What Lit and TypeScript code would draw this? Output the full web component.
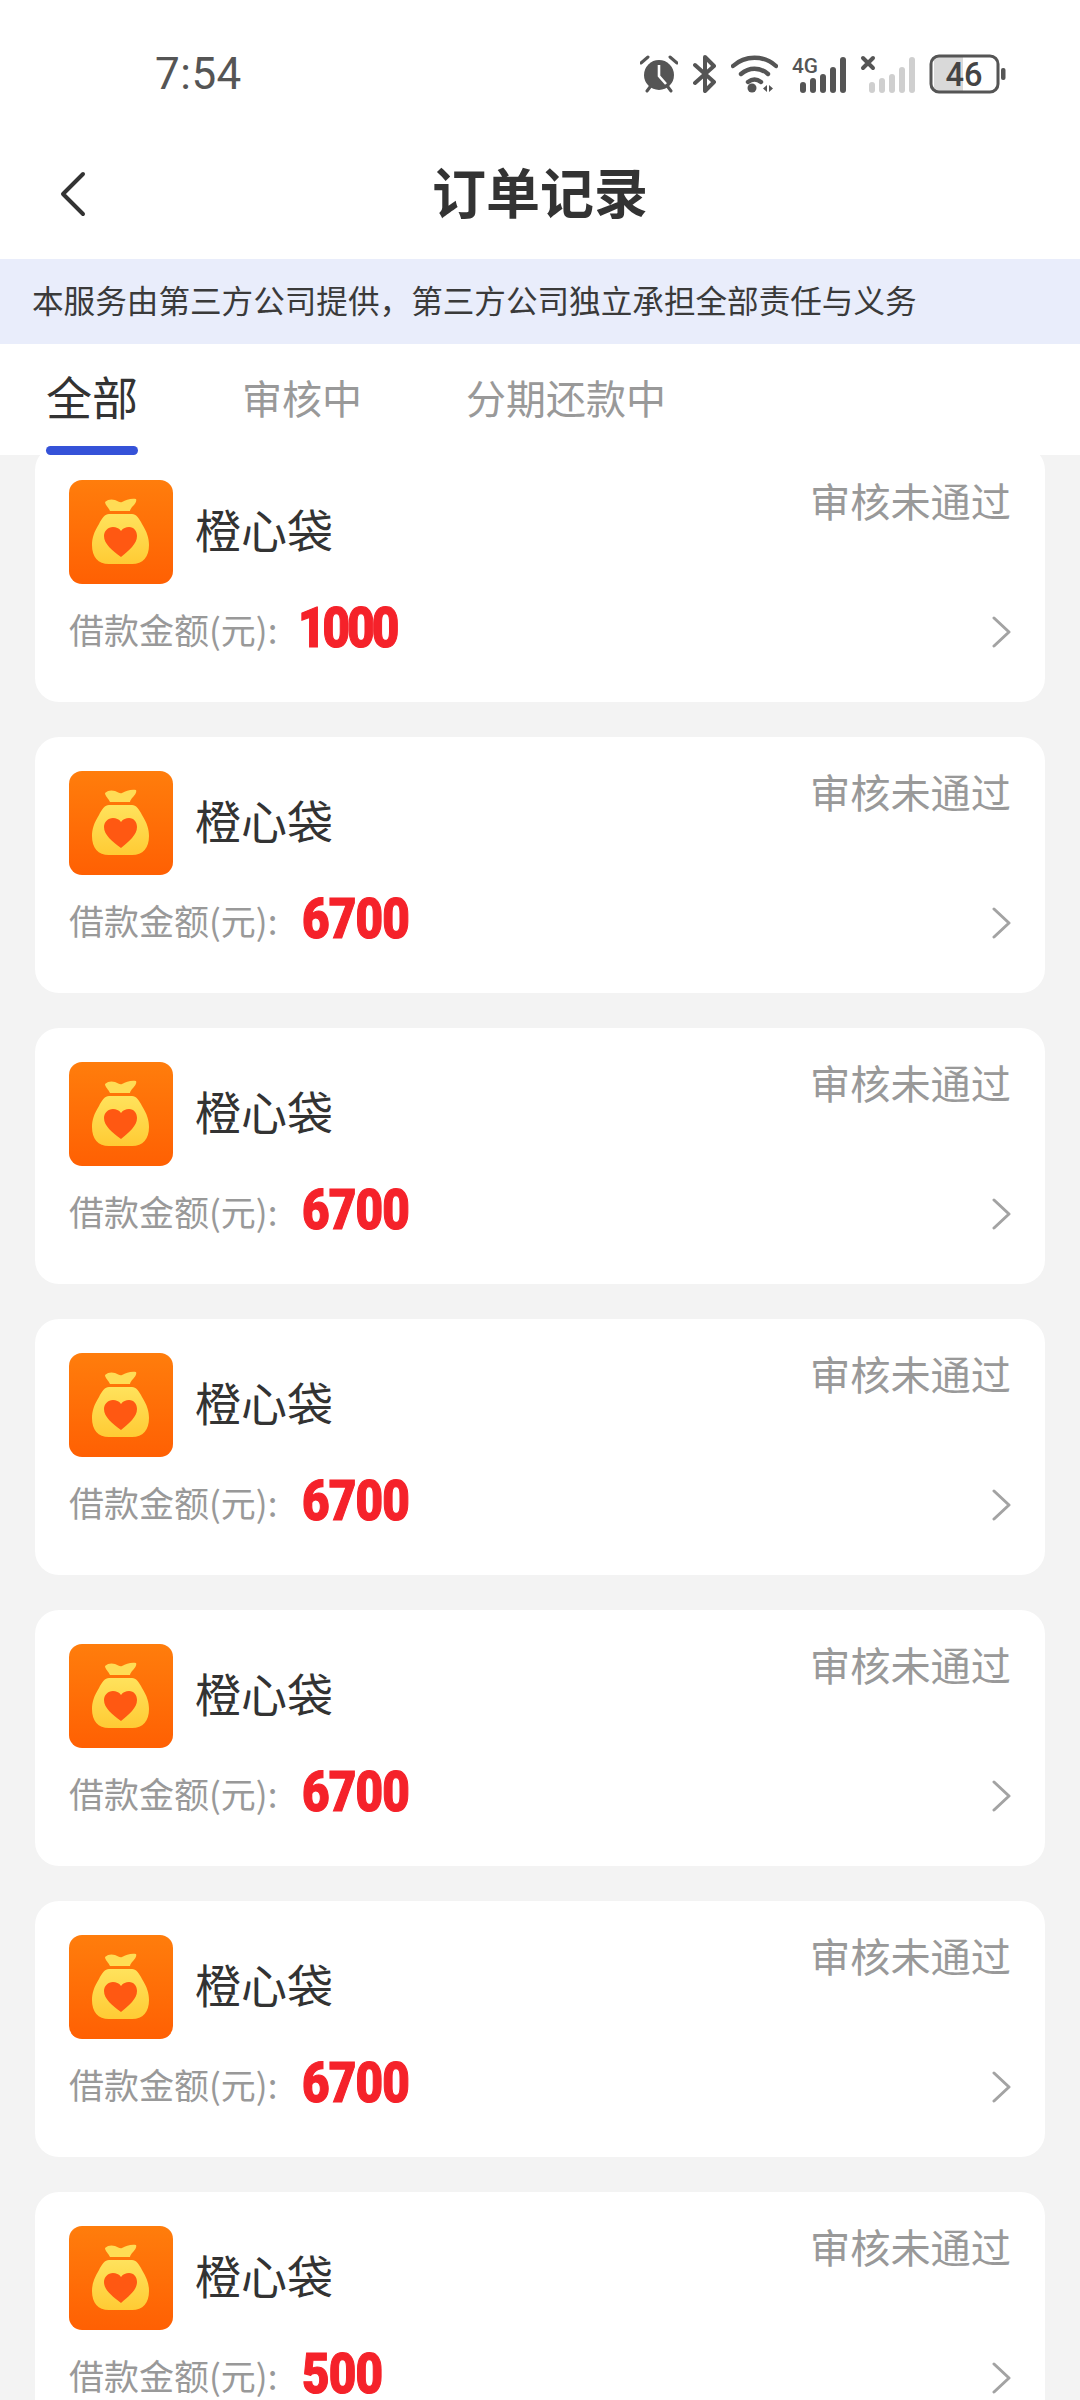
import { LitElement, html, css, svg } from "lit";
import { customElement } from "lit/decorators.js";

const orders = ["1000", "6700", "6700", "6700", "6700", "6700", "500"];

// the orange money bag logo, one gradient id per card is not needed as they are identical
const bagIcon = html`<svg class="logo" viewBox="0 0 104 104">
  <defs>
    <linearGradient id="bg" x1="0" y1="0" x2="0" y2="1">
      <stop offset="0" stop-color="#ff7d0c" />
      <stop offset="1" stop-color="#ff6003" />
    </linearGradient>
    <linearGradient id="bag" x1="0" y1="0" x2="0" y2="1">
      <stop offset="0" stop-color="#ffe25c" />
      <stop offset="1" stop-color="#ffcb34" />
    </linearGradient>
  </defs>
  <rect width="104" height="104" rx="13" fill="url(#bg)" />
  <path
    d="M36 22c3-3 7-3 10-2 3 1 5 3 7 2 4-2 9-4 14-3 1 2-1 5-3 7-2 2-3 4-3 5H41c-1-3-5-6-5-9z"
    fill="#ffdc55"
  />
  <path
    d="M40 34h23c4 0 7 4 10 10 5 8 7 14 7 21 0 12-6 19-17 19H40c-11 0-17-7-17-19 0-7 2-13 7-21 3-6 6-10 10-10z"
    fill="url(#bag)"
  />
  <path
    d="M52 77C43 70 35 64 35 56c0-5 4-9 9-9 3 0 6 1 8 4 2-3 5-4 8-4 5 0 8 4 8 9 0 8-8 14-16 21z"
    fill="#ff5812"
  />
</svg>`;

const bars = (color: string) => svg`
  <rect x="0" y="25" width="6" height="11" rx="3" fill="${color}" />
  <rect x="10" y="21" width="6" height="15" rx="3" fill="${color}" />
  <rect x="20" y="17" width="6" height="19" rx="3" fill="${color}" />
  <rect x="30" y="10" width="6" height="26" rx="3" fill="${color}" />
  <rect x="40" y="0" width="6" height="36" rx="3" fill="${color}" />
`;

@customElement("app-root")
export class AppRoot extends LitElement {
  static styles = css`
    :host {
      display: flex;
      flex-direction: column;
      width: 1080px;
      height: 2400px;
      overflow: hidden;
      background: #f3f3f3;
      font-family: "Noto Sans CJK SC", "Noto Sans", sans-serif;
      color: #333;
    }

    .status {
      height: 130px;
      flex: none;
      background: #fff;
      display: flex;
      align-items: center;
      justify-content: space-between;
      padding: 18px 73px 0 155px;
      box-sizing: border-box;
    }
    .time {
      font-family: "Roboto", sans-serif;
      font-size: 44px;
      color: #555;
      letter-spacing: 0.5px;
    }
    .icons {
      display: flex;
      align-items: center;
      height: 40px;
    }
    .icons svg {
      display: block;
      flex: none;
    }
    .st-text {
      font-family: "Roboto", sans-serif;
      font-weight: 500;
    }

    .nav {
      height: 129px;
      flex: none;
      background: #fff;
      display: flex;
      align-items: center;
      justify-content: center;
      position: relative;
    }
    .back {
      position: absolute;
      left: 58px;
      top: 41px;
    }
    .title {
      font-size: 54px;
      font-weight: 700;
      line-height: 1;
      margin-top: -8px;
    }

    .notice {
      height: 85px;
      flex: none;
      box-sizing: border-box;
      padding: 0 0 5px 32px;
      background: #e9edfb;
      display: flex;
      align-items: center;
      font-size: 31.6px;
      color: #3a3a3a;
    }

    .tabs {
      height: 111px;
      flex: none;
      box-sizing: border-box;
      background: #fff;
      display: flex;
      padding-left: 46px;
    }
    .tab {
      display: flex;
      flex-direction: column;
      align-items: center;
      font-size: 40px;
      line-height: 1;
      color: #999;
      padding-top: 33px;
      margin-right: 104px;
    }
    .tab.on {
      font-size: 46px;
      color: #333;
      padding-top: 28px;
      margin-right: 104px;
    }
    .tab.on::after {
      content: "";
      width: 92px;
      height: 9px;
      margin-top: 28px;
      border-radius: 5px;
      background: #3552d8;
    }

    .list {
      flex: 1;
      min-height: 0;
      overflow: hidden;
    }
    .rows {
      display: flex;
      flex-direction: column;
      gap: 35px;
      padding: 0 35px;
      margin-top: -9px; /* list is scrolled a little */
    }
    .card {
      flex: none;
      height: 256px;
      box-sizing: border-box;
      background: #fff;
      border-radius: 24px;
      padding: 34px 34px 0;
      display: grid;
      grid-template-columns: 1fr auto;
      grid-template-rows: 104px auto;
    }
    .head {
      display: flex;
      align-items: center;
      gap: 22px;
    }
    .logo {
      width: 104px;
      height: 104px;
      display: block;
    }
    .name {
      font-size: 46px;
      line-height: 1;
      color: #333;
      margin-top: -9px;
    }
    .state {
      font-size: 40.2px;
      line-height: 1;
      color: #999;
      margin-top: 0;
    }
    .amount {
      display: flex;
      align-items: center;
      margin-top: 24px;
      height: 44px;
    }
    .label {
      font-size: 35px;
      line-height: 1;
      color: #999;
      width: 233px;
      margin-top: -3px;
    }
    .value {
      display: inline-block;
      font-family: "Roboto", sans-serif;
      font-weight: 900;
      font-size: 56px;
      line-height: 1;
      letter-spacing: -1px;
      color: #f5222a;
      -webkit-text-stroke: 1.2px #f5222a;
      transform: scaleX(0.85);
      transform-origin: left center;
      margin-top: -4px;
    }
    .value.narrow {
      margin-left: -4px;
      letter-spacing: -3.5px;
    }
    .arrow {
      display: block;
      justify-self: end;
      margin: 32px -2px 0 0;
    }
  `;

  render() {
    return html`
      <div class="status">
        <span class="time">7:54</span>
        <div class="icons">
          <svg width="38" height="38" viewBox="0 0 38 38" style="margin-right:15px">
            <circle cx="19" cy="20" r="15" fill="#555" />
            <path d="M19 10v11l7 8" fill="none" stroke="#fff" stroke-width="2.6" />
            <path d="M1 8l7-6M37 8l-7-6M7 36l3-4M31 36l-3-4" stroke="#555" stroke-width="3" stroke-linecap="round" />
          </svg>
          <svg width="24" height="38" viewBox="0 0 24 38" style="margin-right:14px">
            <path d="M2 10l19 17-9 9V2l9 9L2 28" fill="none" stroke="#555" stroke-width="4" stroke-linejoin="round" stroke-linecap="round" />
          </svg>
          <svg width="47" height="38" viewBox="0 0 47 38" style="margin-right:14px">
            <path d="M2 11c12-11 31-11 43 0M10 19c8-7 19-7 27 0M17 27c4-3 9-3 13 0" fill="none" stroke="#555" stroke-width="4.4" stroke-linecap="round" />
            <circle cx="21" cy="33" r="4.5" fill="#555" />
            <path d="M36 30v7l-4-3.500zM38 30v7l4-3.500z" fill="#555" />
          </svg>
          <svg width="54" height="46" viewBox="0 -4 54 46" style="margin-right:14px">
            <text x="0" y="18" font-size="21" fill="#555" class="st-text" textLength="26" lengthAdjust="spacingAndGlyphs">4G</text>
            <g transform="translate(8 2)">${bars("#555")}</g>
          </svg>
          <svg width="55" height="38" viewBox="0 0 55 38" style="margin-right:14px">
            <path d="M3 3l10 10M13 3L3 13" stroke="#555" stroke-width="4" stroke-linecap="round" />
            <g transform="translate(9 2)">${bars("#cfcfcf")}</g>
          </svg>
          <svg width="78" height="40" viewBox="0 0 78 40">
            <path d="M5 3h29v34H5z" fill="#d9d9d9" />
            <rect x="2" y="2" width="67" height="36" rx="8" fill="none" stroke="#555" stroke-width="3" />
            <text x="35" y="32" text-anchor="middle" font-size="33" fill="#444" class="st-text" textLength="37" lengthAdjust="spacingAndGlyphs">46</text>
            <rect x="72" y="14" width="4.500" height="12" rx="2" fill="#555" />
          </svg>
        </div>
      </div>

      <div class="nav">
        <svg class="back" width="30" height="46" viewBox="0 0 30 46">
          <path d="M25 3L5 23l20 20" fill="none" stroke="#333" stroke-width="4" stroke-linecap="round" stroke-linejoin="round" />
        </svg>
        <span class="title">订单记录</span>
      </div>

      <div class="notice">本服务由第三方公司提供，第三方公司独立承担全部责任与义务</div>

      <div class="tabs">
        <div class="tab on">全部</div>
        <div class="tab">审核中</div>
        <div class="tab">分期还款中</div>
      </div>

      <div class="list">
        <div class="rows">
          ${orders.map(
            (amount) => html`
              <div class="card">
                <div class="head">${bagIcon}<span class="name">橙心袋</span></div>
                <div class="state">审核未通过</div>
                <div class="amount">
                  <span class="label">借款金额(元):</span>
                  <span class="value ${amount.startsWith("1") ? "narrow" : ""}">${amount}</span>
                </div>
                <svg class="arrow" width="22" height="32" viewBox="0 0 22 32">
                  <path d="M3 2l15 14L3 30" fill="none" stroke="#a3a3a3" stroke-width="3" stroke-linecap="round" stroke-linejoin="round" />
                </svg>
              </div>
            `
          )}
        </div>
      </div>
    `;
  }
}
